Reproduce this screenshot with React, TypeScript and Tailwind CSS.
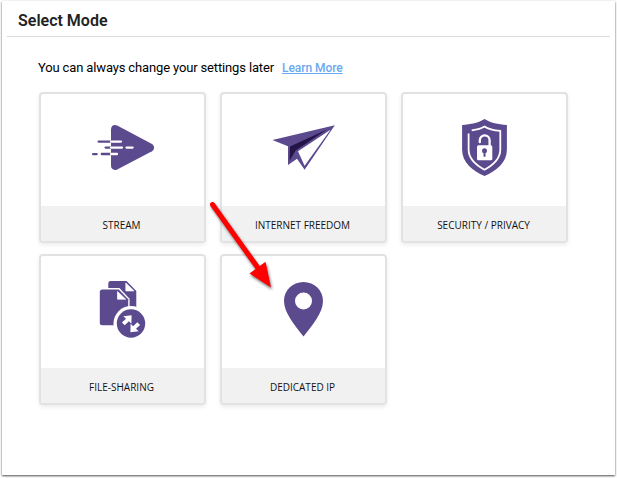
import * as React from "react";

interface Mode {
  label: string;
  icon: React.ReactNode;
}

const StreamIcon = () => (
  <svg width="71" height="64" viewBox="87 118 71 64" fill="none">
    <path
      d="M111 129.200c0-3.400 3.200-5.100 6.200-3.600l34.800 18.300c2.800 1.900 2.800 5.400 0 7.300l-34.800 18.200c-3 1.500-6.200-.2-6.200-3.600z"
      fill="#5c4a8f"
    />
    <g strokeWidth="2.300" strokeLinecap="round">
      <path d="M98.600 141.600H111M105.600 147.600H111M93.200 154.200H96.600M101.800 154H111" stroke="#5c4a8f" />
      <path d="M111 141.600H121M111 147.600H122M126.500 147.600H132.600M111 154H117" stroke="#fff" />
    </g>
  </svg>
);

const PlaneIcon = () => (
  <svg width="71" height="64" viewBox="268 118 71 64">
    <path d="M272.400 140 334.800 125.200 304.600 169.800 297 158.800 288 165V146.200z" fill="#5c4a8f" />
    <path d="M290 146.600 327 129.400 295.600 150.400 289.600 160.800z" fill="#251447" />
    <path d="M298 151.200 330.500 129.800 304.600 165.800z" fill="#fff" />
  </svg>
);

const ShieldIcon = () => (
  <svg width="71" height="64" viewBox="449 118 71 64" fill="none">
    <path
      d="M484.500 119c6 4 13.500 5.200 22.400 6v24.500c0 13-10.500 21.500-22.400 26.500-11.900-5-22.400-13.500-22.400-26.500V125c8.900-.8 16.400-2 22.400-6z"
      fill="#5c4a8f"
    />
    <path
      d="M471.700 130.300c4.800-.7 9.200-1.600 12.800-3.900 4.500 3 10 3.900 15.800 4.400v18.700c0 9.500-7.500 15.800-15.800 20.200-8.300-4.400-15.900-10.700-15.900-20.200V133.500"
      stroke="#fff"
      strokeWidth="1.800"
      strokeLinejoin="round"
    />
    <path d="M479.800 142.200v-2a4.900 4.900 0 0 1 9.800 0v6" stroke="#fff" strokeWidth="2.300" strokeLinecap="round" />
    <rect x="477" y="145.300" width="15.300" height="14.900" rx="1.500" fill="#fff" />
    <circle cx="484.500" cy="150.800" r="2.500" fill="#5c4a8f" />
    <path d="M484.500 151.500v5.200" stroke="#5c4a8f" strokeWidth="2" />
  </svg>
);

const FilesIcon = () => (
  <svg width="71" height="64" viewBox="87 280 71 64">
    <path d="M110.600 281H126.500L136.300 291V325H108.300V283.300q0-2.300 2.300-2.300z" fill="#5c4a8f" />
    <path d="M125.800 283V290.900H134z" fill="#fff" stroke="#fff" strokeWidth=".7" strokeLinejoin="round" />
    <path
      d="M102.300 289.500H118.800L128.200 299.200V325.200H102.300q-2.500 0-2.500-2.500V292q0-2.500 2.500-2.500z"
      fill="#5c4a8f"
      stroke="#fff"
      strokeWidth="2.800"
      paintOrder="stroke"
    />
    <path d="M117.500 291.500V299.200H125.700z" fill="#fff" stroke="#fff" strokeWidth=".7" strokeLinejoin="round" />
    <circle cx="131" cy="323.500" r="17.500" fill="#fff" />
    <circle cx="131" cy="323.500" r="14.200" fill="#5c4a8f" />
    <path
      d="M123.300 316.300 131.600 315.300 131.400 323.700 128.900 321.300 124.700 325.300 121.900 322.500 126 318.700z"
      fill="#fff"
    />
    <path
      d="M138.700 331.200 130.400 332.200 130.600 323.800 133.100 326.200 137.300 322.200 140.100 325 136 328.800z"
      fill="#fff"
    />
  </svg>
);

const PinIcon = () => (
  <svg width="71" height="64" viewBox="268 280 71 64">
    <path
      d="M303.500 282c-11 0-19.500 8.300-19.500 19 0 11.500 10 23.500 19.500 35.500 9.500-12 19.500-24 19.500-35.500 0-10.700-8.500-19-19.500-19zm0 10.500a8.500 8.500 0 1 1 0 17 8.500 8.500 0 0 1 0-17z"
      fill="#5c4a8f"
    />
  </svg>
);

const MODES: Mode[] = [
  { label: "STREAM", icon: <StreamIcon /> },
  { label: "INTERNET FREEDOM", icon: <PlaneIcon /> },
  { label: "SECURITY / PRIVACY", icon: <ShieldIcon /> },
  { label: "FILE-SHARING", icon: <FilesIcon /> },
  { label: "DEDICATED IP", icon: <PinIcon /> },
];

const ModeCard = ({ label, icon }: Mode) => (
  <button className="flex h-[151px] w-[167px] flex-col overflow-hidden rounded-[4px] border-2 border-[#e2e2e2] bg-white shadow-[0_2px_4px_rgba(0,0,0,0.08)]">
    <span className="flex h-[112px] w-full shrink-0 items-center justify-center">{icon}</span>
    <span className="flex w-full flex-1 items-center justify-center bg-[#f1f1f1] pt-[3px] pr-[2px] font-['Open_Sans',sans-serif] text-[10px] leading-none text-[#111]">
      {label}
    </span>
  </button>
);

// Points from the mode cards to the dedicated IP option
const Arrow = () => (
  <svg
    className="pointer-events-none absolute top-[195px] left-[200px] drop-shadow-[1px_2px_1.5px_rgba(0,0,0,0.55)]"
    width="80"
    height="100"
    viewBox="200 195 80 100"
  >
    <path d="M212.500 204.500 258 268" stroke="#f00" strokeWidth="5" strokeLinecap="round" />
    <path d="M249.500 273.500 265.500 261.800 271 287.500z" fill="#f00" />
  </svg>
);

export default function App() {
  return (
    <div className="relative h-[478px] w-[617px] overflow-hidden bg-white px-[2px] pt-px font-[Roboto,sans-serif]">
      <main className="h-[474px] w-[613px] bg-white shadow-[0_1px_2px_rgba(0,0,0,0.7)]">
        <header className="mx-[5px] h-9 border-b border-[#dcdcdc] pl-[11px]">
          <h1 className="pt-2 text-[16px] leading-6 font-semibold text-[#222]">Select Mode</h1>
        </header>

        <div className="pt-[21px] pl-9">
          <p className="flex h-5 items-center gap-2 text-[13px] text-black">
            <span className="tracking-[-0.145px]">You can always change your settings later</span>
            <a href="#" className="text-[12px] font-medium tracking-[-0.05px] text-[#6aaaf0] underline underline-offset-1">
              Learn More
            </a>
          </p>

          <div className="mt-[14px] ml-px grid w-[530px] grid-cols-[repeat(3,167px)] gap-x-[14px] gap-y-[11px]">
            {MODES.map((mode) => (
              <ModeCard key={mode.label} {...mode} />
            ))}
          </div>
        </div>
      </main>
      <Arrow />
    </div>
  );
}
